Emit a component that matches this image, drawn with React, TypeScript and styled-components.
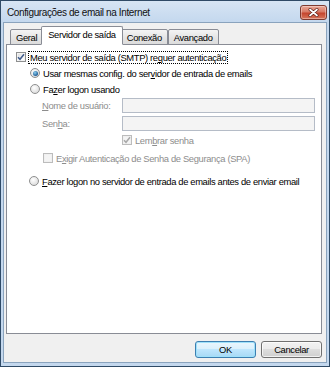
import React from 'react'
import styled, { createGlobalStyle, css } from 'styled-components'

const GlobalStyle = createGlobalStyle`
  html, body { margin: 0; padding: 0; background: #fff; }
  body {
    font-family: "Liberation Sans", Arial, sans-serif;
    font-size: 9.4px;
    letter-spacing: -0.35px;
    color: #000;
  }
`

const Window = styled.div`
  width: 330px;
  height: 367px;
  box-sizing: border-box;
  border: 1px solid #2f4a66;
  background: #c4d8ee;
  display: flex;
  flex-direction: column;
`

const TitleBar = styled.div`
  height: 21px;
  flex: none;
  display: flex;
  align-items: center;
  justify-content: space-between;
  padding: 0 2px 0 6px;
  background: linear-gradient(#d7e5f4, #c4d8ee);
`

const Title = styled.span`
  font-size: 10px;
  letter-spacing: -0.38px;
  color: #111;
  margin-top: 1px;
`

const CloseButton = styled.div`
  width: 25px;
  height: 13px;
  margin-top: 1px;
  border: 1px solid #7e3a30;
  border-radius: 3px;
  background: linear-gradient(#eaa898, #d87a66 45%, #c5452e 55%, #d8765c);
  display: flex;
  align-items: center;
  justify-content: center;
  box-shadow: inset 0 0 0 1px rgba(255, 255, 255, 0.35);
`

const Client = styled.div`
  flex: 1;
  margin: 0 2px 3px 2px;
  border: 1px solid #8aa3bd;
  background: #f0f0f0;
  display: flex;
  flex-direction: column;
  padding: 2px 4px 3px 2px;
`

const TabStrip = styled.div`
  display: flex;
  align-items: flex-end;
  height: 19px;
  padding-left: 4px;
  position: relative;
  z-index: 1;
`

const Tab = styled.div<{ $active?: boolean }>`
  box-sizing: border-box;
  height: ${(p) => (p.$active ? 19 : 16)}px;
  padding: 0 ${(p) => (p.$active ? 6 : 5)}px ${(p) => (p.$active ? 2 : 0)}px;
  margin: 0 ${(p) => (p.$active ? -2 : 0)}px -1px;
  border: 1px solid #898c95;
  border-bottom-color: ${(p) => (p.$active ? '#fff' : '#898c95')};
  border-radius: 2px 2px 0 0;
  background: ${(p) => (p.$active ? '#fff' : 'linear-gradient(#f4f4f4, #e6e6e6 50%, #dcdcdc)')};
  display: flex;
  align-items: center;
  position: relative;
  z-index: ${(p) => (p.$active ? 2 : 0)};
`

const Panel = styled.div`
  height: 290px;
  box-sizing: border-box;
  border: 1px solid #898c95;
  background: #fff;
  display: flex;
  flex-direction: column;
  padding: 4px 6px 0 9px;
`

const Row = styled.div<{ $indent?: number; $gap?: number }>`
  display: flex;
  align-items: center;
  height: 16px;
  padding-left: ${(p) => p.$indent ?? 0}px;
  margin-top: ${(p) => p.$gap ?? 0}px;
`

const FieldRow = styled.div<{ $gap?: number }>`
  display: flex;
  align-items: center;
  height: 15px;
  margin-top: ${(p) => p.$gap ?? 0}px;
  padding-left: 26px;
`

const FieldLabel = styled.span`
  width: 80px;
  flex: none;
  color: #8d8d8d;
`

const TextBox = styled.div`
  flex: 1;
  height: 15px;
  box-sizing: border-box;
  border: 1px solid #b5bcc7;
  background: #f4f4f4;
`

const Label = styled.span<{ $disabled?: boolean; $focus?: boolean }>`
  margin-left: 3px;
  white-space: nowrap;
  color: ${(p) => (p.$disabled ? '#8d8d8d' : '#000')};
  ${(p) =>
    p.$focus &&
    css`
      outline: 1px dotted #000;
      outline-offset: 0;
      padding: 0 1px;
    `}
`

const Box = styled.span<{ $disabled?: boolean }>`
  width: 10px;
  height: 10px;
  box-sizing: border-box;
  flex: none;
  border: 1px solid ${(p) => (p.$disabled ? '#bcbcbc' : '#8e8f8f')};
  background: ${(p) =>
    p.$disabled ? '#f4f4f4' : 'linear-gradient(135deg, #d9dadb, #f5f5f5 60%, #fff)'};
  box-shadow: inset 0 0 0 1px ${(p) => (p.$disabled ? '#f0f0f0' : '#f4f4f4')};
  display: flex;
  align-items: center;
  justify-content: center;
`

const Radio = styled.span<{ $checked?: boolean }>`
  width: 10px;
  height: 10px;
  box-sizing: border-box;
  flex: none;
  border-radius: 50%;
  border: 1px solid #8e8f8f;
  background: radial-gradient(circle at 40% 35%, #fff, #dcdcdc 80%);
  display: flex;
  align-items: center;
  justify-content: center;
  &::after {
    content: '';
    display: ${(p) => (p.$checked ? 'block' : 'none')};
    width: 5px;
    height: 5px;
    border-radius: 50%;
    background: radial-gradient(circle at 40% 35%, #8fd0f2, #1f5e96 70%, #173c63);
  }
`

const Key = styled.u`
  text-decoration-thickness: 1px;
  text-underline-offset: 1px;
`

const Footer = styled.div`
  flex: 1;
  display: flex;
  justify-content: flex-end;
  align-items: flex-start;
  gap: 5px;
  padding-top: 7px;
`

const Button = styled.div<{ $default?: boolean }>`
  width: 61px;
  height: 17px;
  box-sizing: border-box;
  border-radius: 3px;
  border: 1px solid ${(p) => (p.$default ? '#3c7fb1' : '#707070')};
  background: ${(p) =>
    p.$default
      ? 'linear-gradient(#eaf6fd, #d9f0fc 50%, #bee6fd 50%, #a7d9f5)'
      : 'linear-gradient(#f2f2f2, #ebebeb 50%, #dddddd 50%, #cfcfcf)'};
  box-shadow: inset 0 0 0 1px ${(p) => (p.$default ? '#9fe1fa' : 'rgba(255,255,255,0.7)')};
  display: flex;
  align-items: center;
  justify-content: center;
`

const Check = ({ color }: { color: string }) => (
  <svg width="8" height="8" viewBox="0 0 8 8">
    <path d="M1 4.2 L3 6.3 L7 1.2" fill="none" stroke={color} strokeWidth="1.5" />
  </svg>
)

const CloseGlyph = () => (
  <svg width="11" height="9" viewBox="0 0 11 9">
    <path d="M2 1.5 L9 7.5 M9 1.5 L2 7.5" stroke="#5a1c14" strokeWidth="3" strokeLinecap="round" />
    <path d="M2 1.5 L9 7.5 M9 1.5 L2 7.5" stroke="#fff" strokeWidth="1.7" strokeLinecap="round" />
  </svg>
)

export default function App() {
  return (
    <>
      <GlobalStyle />
      <Window>
        <TitleBar>
          <Title>Configurações de email na Internet</Title>
          <CloseButton>
            <CloseGlyph />
          </CloseButton>
        </TitleBar>
        <Client>
          <TabStrip>
            <Tab>Geral</Tab>
            <Tab $active>Servidor de saída</Tab>
            <Tab>Conexão</Tab>
            <Tab>Avançado</Tab>
          </TabStrip>
          <Panel>
            <Row>
              <Box>
                <Check color="#3f5b8c" />
              </Box>
              <Label $focus>
                Meu servidor de saída (SMTP) re<Key>q</Key>uer autenticação
              </Label>
            </Row>
            <Row $indent={14}>
              <Radio $checked />
              <Label>
                Usar mesmas config. do ser<Key>v</Key>idor de entrada de emails
              </Label>
            </Row>
            <Row $indent={14}>
              <Radio />
              <Label>
                Fa<Key>z</Key>er logon usando
              </Label>
            </Row>
            <FieldRow $gap={1}>
              <FieldLabel>
                <Key>N</Key>ome de usuário:
              </FieldLabel>
              <TextBox />
            </FieldRow>
            <FieldRow $gap={3}>
              <FieldLabel>
                Sen<Key>h</Key>a:
              </FieldLabel>
              <TextBox />
            </FieldRow>
            <Row $indent={106} $gap={1}>
              <Box $disabled>
                <Check color="#a8a8a8" />
              </Box>
              <Label $disabled>
                Lem<Key>b</Key>rar senha
              </Label>
            </Row>
            <Row $indent={27} $gap={2}>
              <Box $disabled />
              <Label $disabled>
                E<Key>x</Key>igir Autenticação de Senha de Segurança (SPA)
              </Label>
            </Row>
            <Row $indent={13} $gap={7}>
              <Radio />
              <Label>
                <Key>F</Key>azer logon no servidor de entrada de emails antes de enviar email
              </Label>
            </Row>
          </Panel>
          <Footer>
            <Button $default>OK</Button>
            <Button>Cancelar</Button>
          </Footer>
        </Client>
      </Window>
    </>
  )
}
